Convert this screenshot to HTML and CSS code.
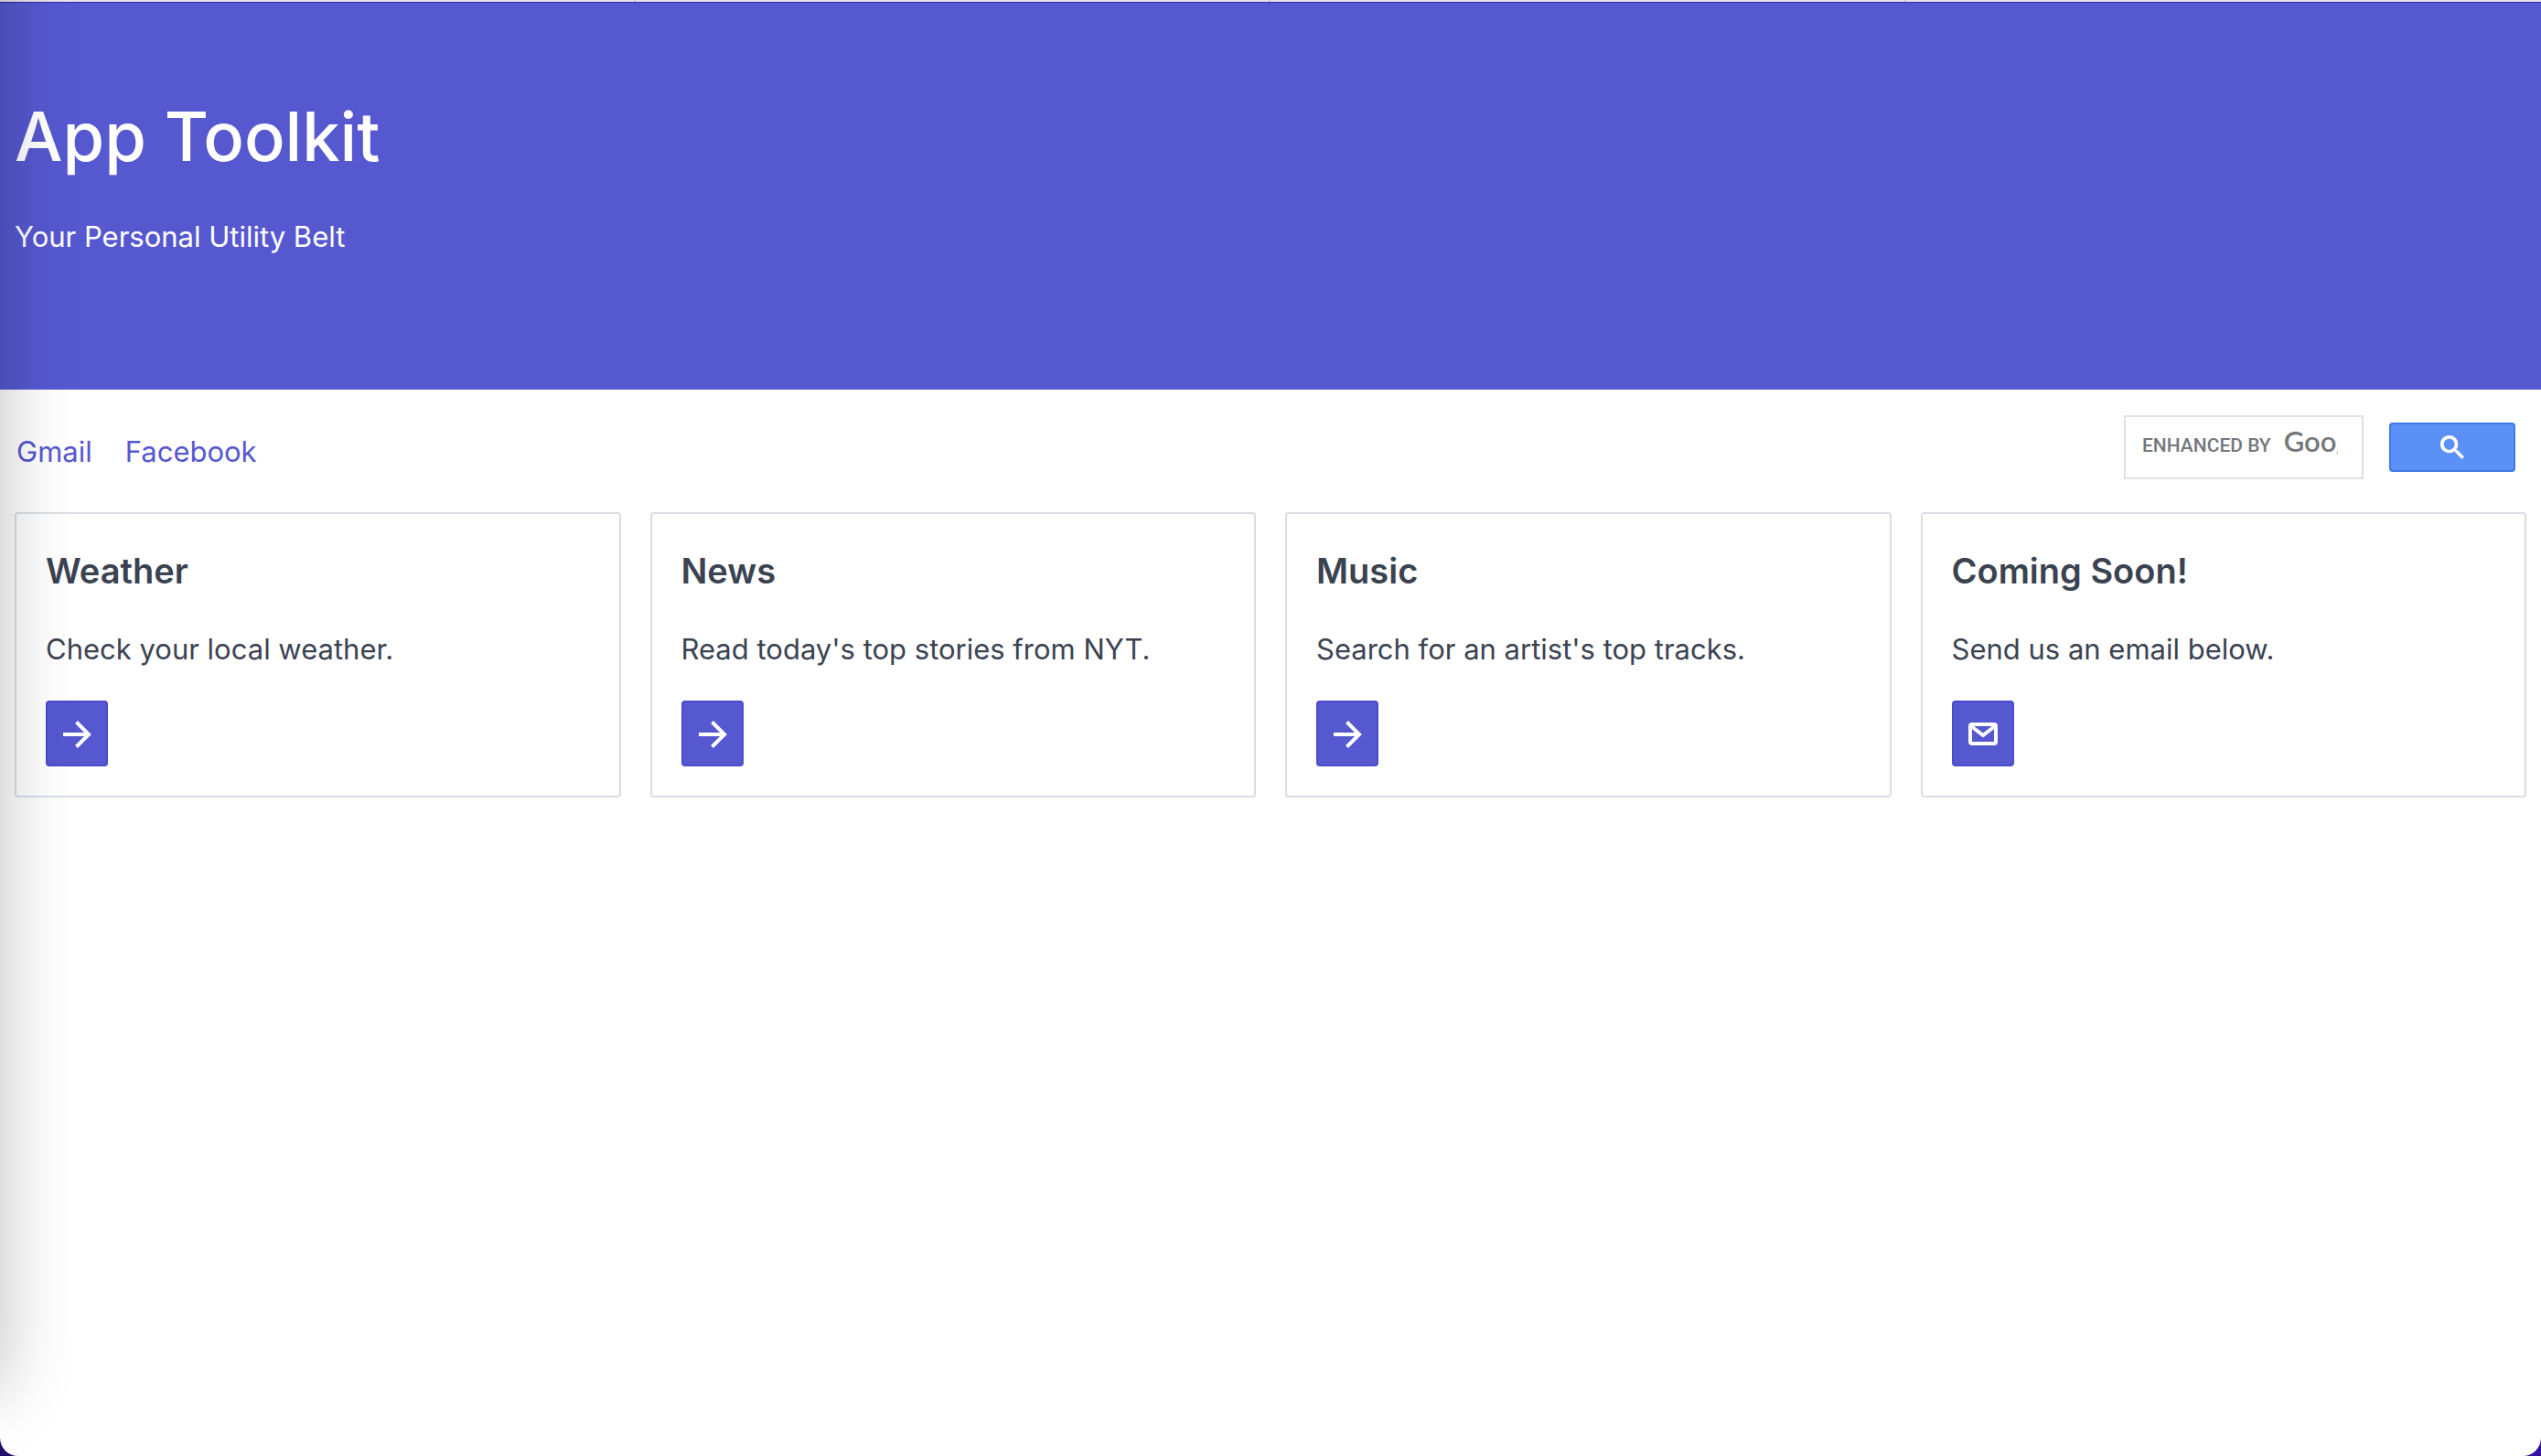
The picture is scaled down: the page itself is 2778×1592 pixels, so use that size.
FILE: index.html
```html
<!DOCTYPE html>
<html lang="en">
<head>
<meta charset="utf-8">
<meta name="viewport" content="width=device-width, initial-scale=1">
<title>App Toolkit</title>
<link rel="stylesheet" href="styles.css">
</head>
<body>
<div class="window">
  <div class="tabstrip"><span></span><span></span><span></span><span></span></div>
  <header class="hero">
    <h1>App Toolkit</h1>
    <p>Your Personal Utility Belt</p>
  </header>
  <div class="navbar">
    <nav class="links">
      <a href="#gmail">Gmail</a>
      <a href="#facebook">Facebook</a>
    </nav>
    <form class="search">
      <div class="search-field">
        <input id="q" type="text">
        <label for="q" class="brand"><span class="by">ENHANCED BY</span><span class="google">Google</span></label>
      </div>
      <button type="button" class="search-btn" aria-label="Search">
        <svg viewBox="0 0 13 13" width="26" height="26"><path fill="#fff" d="m4.8495 7.8226c0.82666 0 1.5262-0.29146 2.0985-0.87438 0.57232-0.58292 0.86378-1.2877 0.87438-2.1144 0.010599-0.82666-0.28086-1.5262-0.87438-2.0985-0.59352-0.57232-1.293-0.86378-2.0985-0.87438-0.8055-0.010599-1.5103 0.28086-2.1144 0.87438-0.60414 0.59352-0.8956 1.293-0.87438 2.0985 0.021197 0.8055 0.31266 1.5103 0.87438 2.1144 0.56172 0.60414 1.2665 0.8956 2.1144 0.87438zm4.4695 0.2115 3.681 3.6819-1.259 1.284-3.6817-3.7 0.0019784-0.69479-0.090043-0.098846c-0.87973 0.76087-1.92 1.1413-3.1207 1.1413-1.3553 0-2.5025-0.46363-3.4417-1.3909s-1.4088-2.0686-1.4088-3.4239c0-1.3553 0.4696-2.4966 1.4088-3.4239 0.9392-0.92727 2.0864-1.3969 3.4417-1.4088 1.3553-0.011889 2.4906 0.45771 3.406 1.4088 0.9154 0.95107 1.379 2.0924 1.3909 3.4239 0 1.2126-0.38043 2.2588-1.1413 3.1385l0.098834 0.090049z"/></svg>
      </button>
    </form>
  </div>
  <main class="cards">
    <section class="card">
      <h2>Weather</h2>
      <p>Check your local weather.</p>
      <button type="button" class="btn" aria-label="Open weather"><svg viewBox="0 0 32 32" width="32" height="32"><path d="M1 17h28M15.500 3.500l13.500 13.500L15.500 30.500"/></svg></button>
    </section>
    <section class="card">
      <h2>News</h2>
      <p>Read today's top stories from NYT.</p>
      <button type="button" class="btn" aria-label="Open news"><svg viewBox="0 0 32 32" width="32" height="32"><path d="M1 17h28M15.500 3.500l13.500 13.500L15.500 30.500"/></svg></button>
    </section>
    <section class="card">
      <h2>Music</h2>
      <p>Search for an artist's top tracks.</p>
      <button type="button" class="btn" aria-label="Open music"><svg viewBox="0 0 32 32" width="32" height="32"><path d="M1 17h28M15.500 3.500l13.500 13.500L15.500 30.500"/></svg></button>
    </section>
    <section class="card">
      <h2>Coming Soon!</h2>
      <p>Send us an email below.</p>
      <button type="button" class="btn" aria-label="Send email"><svg viewBox="0 0 32 32" width="32" height="32"><rect x="2" y="6" width="28" height="21" rx="2"/><path d="M3 8l13 10L29 8"/></svg></button>
    </section>
  </main>
</div>
</body>
</html>
```
FILE: styles.css
```css
* { box-sizing: border-box; }
html { background: linear-gradient(90deg, #22106a, #3610a0); }
body {
  margin: 0;
  color: #3b4351;
  font: 31px/48px Inter, "Liberation Sans", sans-serif;
}
.window {
  position: relative;
  min-height: 100vh;
  overflow: hidden;
  background: #fff;
  border-radius: 0 0 20px 20px;
}
/* Shadow cast by the neighbouring window */
.window::after {
  content: "";
  position: absolute;
  top: -100px;
  bottom: 72px;
  left: -100px;
  width: 100px;
  box-shadow: 0 0 80px rgba(0, 0, 0, .26);
  pointer-events: none;
}
.tabstrip {
  display: grid;
  grid-template-columns: repeat(4, 1fr);
  height: 2px;
  background: #e6e3ea;
}
.tabstrip span { border-right: 2px solid #cfccd4; }
.tabstrip span:last-child { border-right: 0; }
.hero {
  height: 424px;
  padding: 98px 16px 0;
  border-top: 1px solid #2c2aa8;
  background: #5658d0;
  color: #fff;
}
h1, h2, p { margin: 0; }
h1 {
  margin-bottom: 38px;
  font-size: 74px;
  font-weight: 500;
  line-height: 96px;
}
.navbar {
  display: flex;
  justify-content: space-between;
  align-items: center;
  padding: 28px 28px 36px 18px;
}
.links {
  display: flex;
  gap: 36px;
  padding-top: 10px;
}
.links a { color: #5658d0; text-decoration: none; }
.search {
  display: flex;
  align-items: center;
  gap: 28px;
}
.search-field { position: relative; }
.search-field input {
  display: block;
  width: 262px;
  height: 70px;
  padding: 0 16px;
  border: 2px solid #dfe1e5;
  background: #fff;
  font: inherit;
}
.brand {
  position: absolute;
  inset: 8px 28px 20px 20px;
  display: flex;
  align-items: baseline;
  gap: 14px;
  overflow: hidden;
  color: #74777b;
  line-height: 40px;
  white-space: nowrap;
}
.by { font: 500 21px/40px Roboto, sans-serif; }
.google { font: 600 31px/40px Lato, sans-serif; }
.search-btn {
  display: flex;
  justify-content: center;
  align-items: center;
  width: 138px;
  height: 54px;
  padding: 0;
  border: 2px solid #4078e6;
  border-radius: 4px;
  background: #5b90f7;
}
.cards {
  display: grid;
  grid-template-columns: repeat(4, 1fr);
  gap: 32px;
  padding: 0 16px 32px;
}
.card {
  padding: 38px 32px 32px;
  border: 2px solid #dadee4;
  border-radius: 4px;
}
h2 {
  margin-bottom: 38px;
  font-size: 38px;
  font-weight: 600;
  line-height: 48px;
}
.card p { margin-bottom: 32px; }
.btn {
  display: flex;
  justify-content: center;
  align-items: center;
  width: 68px;
  height: 72px;
  padding: 0;
  border: 2px solid #4a4bce;
  border-radius: 4px;
  background: #5658d0;
}
.btn path, .btn rect {
  fill: none;
  stroke: #fff;
  stroke-width: 4;
}
```
